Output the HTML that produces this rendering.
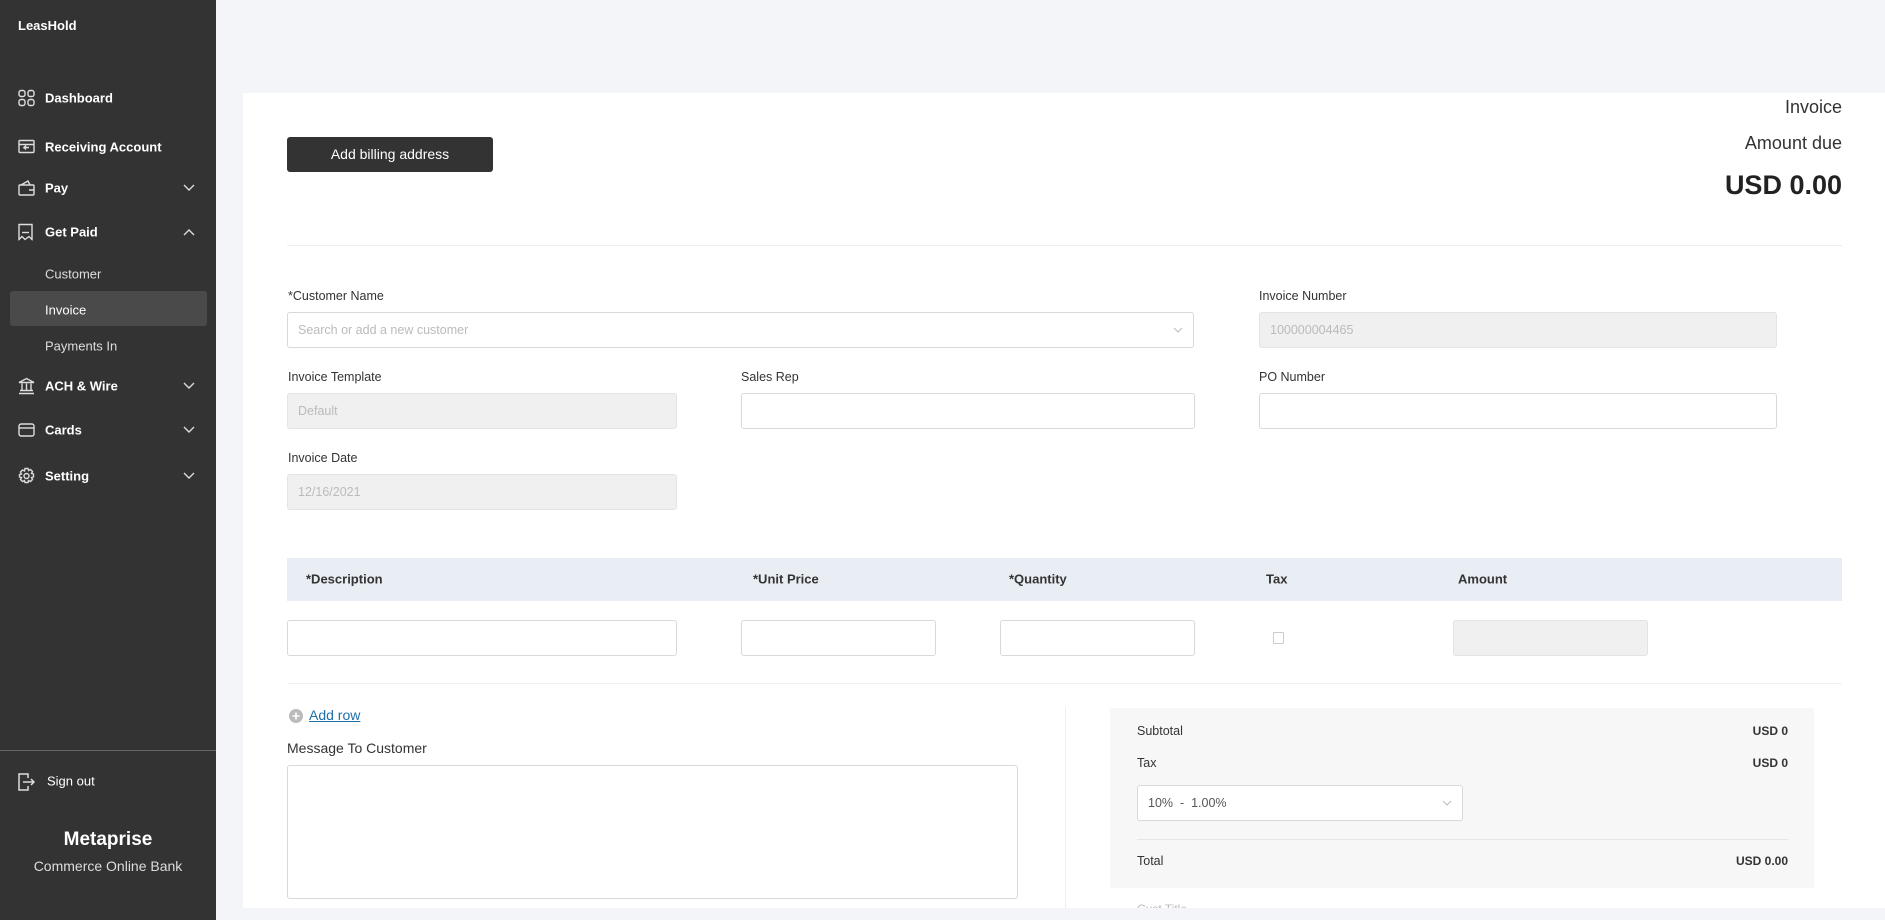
<!DOCTYPE html>
<html><head><meta charset="utf-8"><style>
*{box-sizing:border-box;margin:0;padding:0}
body{width:1885px;height:920px;overflow:hidden;background:#f3f5f8;font-family:"Liberation Sans",Arial,sans-serif;position:relative;color:#333}
.a{position:absolute}
#sb{left:0;top:0;width:216px;height:920px;background:#333}
.nav{position:absolute;left:45px;color:#fff;font-size:13px;font-weight:bold;transform:translateY(-50%)}
.sub{position:absolute;left:45px;color:#ddd;font-size:13px;transform:translateY(-50%)}
.ic{position:absolute;left:18px;transform:translateY(-50%)}
.chev{position:absolute;left:183px;transform:translateY(-50%)}
#card{left:243px;top:93px;width:1642px;height:815px;background:#fff}
.lbl{position:absolute;font-size:12.5px;color:#333;transform:translateY(-50%)}
.inp{position:absolute;height:36px;border:1px solid #d9d9d9;border-radius:3px;background:#fff;font-size:12.5px;color:#bbb;padding-left:10px;line-height:34px}
.dis{background:#f0f0f0;border-color:#e3e3e3}
.th{position:absolute;top:579px;transform:translateY(-50%);font-size:13px;font-weight:bold;color:#333}
</style></head><body>
<div id="sb" class="a">
<div class="a" style="left:18px;top:18px;color:#fff;font-size:13px;font-weight:bold">LeasHold</div>
<svg class="ic" style="top:98px" width="17" height="17" viewBox="0 0 17 17" fill="none" stroke="#ddd" stroke-width="1.4"><rect x="1" y="1" width="6" height="6" rx="2"/><rect x="10" y="1" width="6" height="6" rx="2"/><rect x="1" y="10" width="6" height="6" rx="2"/><rect x="10" y="10" width="6" height="6" rx="2"/></svg>
<div class="nav" style="top:98px">Dashboard</div>
<svg class="ic" style="top:147px" width="17" height="15" viewBox="0 0 17 15" fill="none" stroke="#ddd" stroke-width="1.4"><rect x="1" y="1" width="15" height="12" rx="1"/><path d="M1 5h15M11 8H6l2-2M6 8l2 2"/></svg>
<div class="nav" style="top:147px">Receiving Account</div>
<svg class="ic" style="top:188px" width="17" height="16" viewBox="0 0 17 16" fill="none" stroke="#ddd" stroke-width="1.4"><rect x="1" y="5" width="15" height="10" rx="1"/><path d="M3 5l7-4 2 4M11 10h5"/></svg>
<div class="nav" style="top:188px">Pay</div>
<svg class="chev" style="top:188px" width="12" height="8" viewBox="0 0 12 8" fill="none" stroke="#ddd" stroke-width="1.4"><path d="M1 1l5 5 5-5"/></svg>
<svg class="ic" style="top:232px" width="15" height="17" viewBox="0 0 15 17" fill="none" stroke="#ddd" stroke-width="1.4"><path d="M1 1h13v15l-3-3-4 3-3-3-3 3z"/><path d="M4 9h7"/></svg>
<div class="nav" style="top:232px">Get Paid</div>
<svg class="chev" style="top:232px" width="12" height="8" viewBox="0 0 12 8" fill="none" stroke="#ddd" stroke-width="1.4"><path d="M1 7l5-5 5 5"/></svg>
<div class="sub" style="top:274px">Customer</div>
<div class="a" style="left:10px;top:291px;width:197px;height:35px;background:#4a4a4a;border-radius:3px"></div>
<div class="sub" style="top:310px;color:#fff">Invoice</div>
<div class="sub" style="top:346px">Payments In</div>
<svg class="ic" style="top:386px" width="17" height="17" viewBox="0 0 17 17" fill="none" stroke="#ddd" stroke-width="1.4"><path d="M1 5l7.5-4 7.5 4zM1 16h15M2 13h13M4 6v7M8.5 6v7M13 6v7"/></svg>
<div class="nav" style="top:386px">ACH &amp; Wire</div>
<svg class="chev" style="top:386px" width="12" height="8" viewBox="0 0 12 8" fill="none" stroke="#ddd" stroke-width="1.4"><path d="M1 1l5 5 5-5"/></svg>
<svg class="ic" style="top:430px" width="17" height="14" viewBox="0 0 17 14" fill="none" stroke="#ddd" stroke-width="1.4"><rect x="1" y="1" width="15" height="12" rx="2"/><path d="M1 5h15"/></svg>
<div class="nav" style="top:430px">Cards</div>
<svg class="chev" style="top:430px" width="12" height="8" viewBox="0 0 12 8" fill="none" stroke="#ddd" stroke-width="1.4"><path d="M1 1l5 5 5-5"/></svg>
<svg class="ic" style="top:476px" width="17" height="17" viewBox="0 0 17 17" fill="none" stroke="#ddd" stroke-width="1.4"><circle cx="8.5" cy="8.5" r="2.5"/><path d="M7 1h3l.5 2 2-1 2 2-1 2 2 .5v3l-2 .5 1 2-2 2-2-1-.5 2H7l-.5-2-2 1-2-2 1-2-2-.5V7l2-.5-1-2 2-2 2 1z"/></svg>
<div class="nav" style="top:476px">Setting</div>
<svg class="chev" style="top:476px" width="12" height="8" viewBox="0 0 12 8" fill="none" stroke="#ddd" stroke-width="1.4"><path d="M1 1l5 5 5-5"/></svg>
<div class="a" style="left:0;top:750px;width:216px;height:1px;background:#666"></div>
<svg class="ic" style="top:782px" width="17" height="18" viewBox="0 0 17 18" fill="none" stroke="#ddd" stroke-width="1.5"><path d="M10 5V1H1v16h9v-4M5 9h11M13 6l3 3-3 3"/></svg>
<div class="nav" style="top:781px;left:47px;font-weight:normal;color:#fff">Sign out</div>
<div class="a" style="left:0;width:216px;top:829px;text-align:center;color:#fff;font-size:19px;font-weight:bold">Metaprise</div>
<div class="a" style="left:0;width:216px;top:858px;text-align:center;color:#ddd;font-size:14px">Commerce Online Bank</div>
</div>
<div id="card" class="a"></div>
<div class="a" style="left:287px;top:137px;width:206px;height:35px;background:#333;border-radius:3px;color:#fff;font-size:14px;text-align:center;line-height:35px">Add billing address</div>
<div class="a" style="right:43px;top:97px;font-size:18px;color:#333">Invoice</div>
<div class="a" style="right:43px;top:133px;font-size:18px;color:#333">Amount due</div>
<div class="a" style="right:43px;top:170px;font-size:27px;font-weight:bold;color:#222">USD 0.00</div>
<div class="a" style="left:287px;top:245px;width:1555px;height:1px;background:#eee"></div>
<div class="lbl" style="left:288px;top:296px">*Customer Name</div>
<div class="inp" style="left:287px;top:312px;width:907px">Search or add a new customer<svg class="a" style="right:10px;top:14px" width="10" height="6" viewBox="0 0 10 6" fill="none" stroke="#bbb"><path d="M1 1l4 4 4-4"/></svg></div>
<div class="lbl" style="left:1259px;top:296px">Invoice Number</div>
<div class="inp dis" style="left:1259px;top:312px;width:518px">100000004465</div>
<div class="lbl" style="left:288px;top:377px">Invoice Template</div>
<div class="inp dis" style="left:287px;top:393px;width:390px">Default</div>
<div class="lbl" style="left:741px;top:377px">Sales Rep</div>
<div class="inp" style="left:741px;top:393px;width:454px"></div>
<div class="lbl" style="left:1259px;top:377px">PO Number</div>
<div class="inp" style="left:1259px;top:393px;width:518px"></div>
<div class="lbl" style="left:288px;top:458px">Invoice Date</div>
<div class="inp dis" style="left:287px;top:474px;width:390px">12/16/2021</div>
<div class="a" style="left:287px;top:558px;width:1555px;height:43px;background:#e9edf4"></div>
<div class="th" style="left:306px">*Description</div>
<div class="th" style="left:753px">*Unit Price</div>
<div class="th" style="left:1009px">*Quantity</div>
<div class="th" style="left:1266px">Tax</div>
<div class="th" style="left:1458px">Amount</div>
<div class="inp" style="left:287px;top:620px;width:390px"></div>
<div class="inp" style="left:741px;top:620px;width:195px"></div>
<div class="inp" style="left:1000px;top:620px;width:195px"></div>
<div class="a" style="left:1273px;top:632px;width:11px;height:12px;border:1px solid #ccc;border-radius:1px"></div>
<div class="inp dis" style="left:1453px;top:620px;width:195px"></div>
<div class="a" style="left:287px;top:683px;width:1555px;height:1px;background:#f0f0f0"></div>
<svg class="a" style="left:289px;top:709px" width="14" height="14" viewBox="0 0 14 14"><circle cx="7" cy="7" r="7" fill="#bbb"/><path d="M7 3.5v7M3.5 7h7" stroke="#fff" stroke-width="1.6"/></svg>
<div class="a" style="left:309px;top:707px;font-size:14px;color:#1f6fa8;text-decoration:underline">Add row</div>
<div class="a" style="left:287px;top:740px;font-size:14px;color:#333">Message To Customer</div>
<div class="a" style="left:287px;top:765px;width:731px;height:134px;border:1px solid #d9d9d9;border-radius:3px"></div>
<div class="a" style="left:1065px;top:707px;width:1px;height:201px;background:#eee"></div>
<div class="a" style="left:1110px;top:708px;width:704px;height:180px;background:#f7f7f7"></div>
<div class="a" style="left:1137px;top:724px;font-size:12.5px">Subtotal</div>
<div class="a" style="right:97px;top:724px;font-size:12px;font-weight:bold">USD 0</div>
<div class="a" style="left:1137px;top:756px;font-size:12.5px">Tax</div>
<div class="a" style="right:97px;top:756px;font-size:12px;font-weight:bold">USD 0</div>
<div class="inp" style="left:1137px;top:785px;width:326px;color:#555">10% &nbsp;- &nbsp;1.00%<svg class="a" style="right:10px;top:14px" width="10" height="6" viewBox="0 0 10 6" fill="none" stroke="#bbb"><path d="M1 1l4 4 4-4"/></svg></div>
<div class="a" style="left:1137px;top:839px;width:651px;height:1px;background:#e6e6e6"></div>
<div class="a" style="left:1137px;top:854px;font-size:12.5px">Total</div>
<div class="a" style="right:97px;top:854px;font-size:12px;font-weight:bold">USD 0.00</div>
<div class="a" style="left:1137px;top:904px;font-size:12px;color:#bbb;height:4px;overflow:hidden;line-height:10px">Cust Title</div>
</body></html>
